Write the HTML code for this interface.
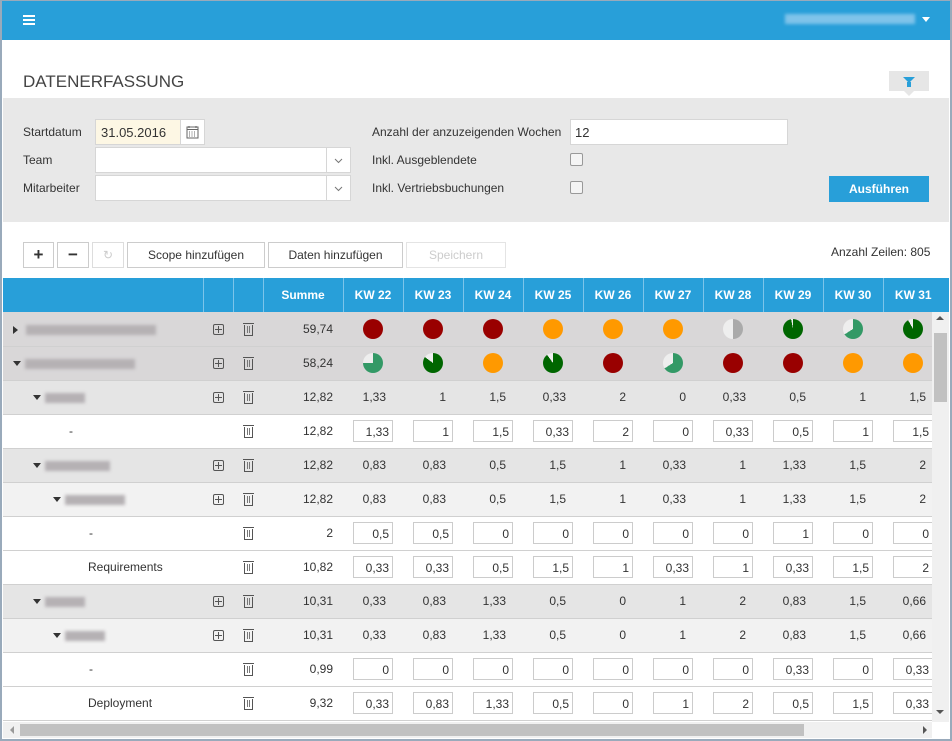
<!DOCTYPE html>
<html><head><meta charset="utf-8"><style>
*{box-sizing:border-box;margin:0;padding:0}
body{width:952px;height:741px;overflow:hidden;font-family:"Liberation Sans",sans-serif;font-size:12px;color:#333;background:#fff;position:relative}
.frame{position:absolute;left:0;top:0;width:952px;height:741px;border:2px solid #9ab;border-top:1px solid #9ab;pointer-events:none;z-index:10}
.top{position:absolute;left:0;top:0;width:952px;height:40px;background:#289fd9}
.ham{position:absolute;left:23px;top:15px;width:12px;height:2px;background:#fff;box-shadow:0 4px 0 #fff,0 8px 0 #fff}
.user{position:absolute;left:785px;top:14px;width:130px;height:10px;background:#7fc3ea;filter:blur(1.5px)}
.caret{position:absolute;left:922px;top:17px;border:4px solid transparent;border-top:5px solid #fff}
h1{position:absolute;left:23px;top:72px;font-weight:normal;font-size:17px;color:#444}
.fbtn{position:absolute;left:889px;top:71px;width:40px;height:20px;background:#e6e6e6}
.fbtn:after{content:"";position:absolute;left:15px;top:20px;border:5px solid transparent;border-top:5px solid #e6e6e6}
.funnel{position:absolute;left:14px;top:6px;border:6px solid transparent;border-top:6px solid #289fd9;border-bottom:0}
.funnel:after{content:"";position:absolute;left:-2px;top:-1px;width:4px;height:5px;background:#289fd9}
.filt{position:absolute;left:3px;top:98px;width:946px;height:124px;background:#e8e8e8}
.lbl{position:absolute;font-size:12px;color:#333}
.inp{position:absolute;background:#fff;border:1px solid #d6d6d6;height:26px;font-size:13px;padding:5px 4px}
.chk{position:absolute;width:13px;height:13px;border:1px solid #999;border-radius:2px;background:#f4f4f4}
.btn{position:absolute;border:1px solid #ccc;background:#fff;height:26px;font-size:12px;text-align:center;line-height:24px;color:#333}
.run{position:absolute;left:829px;top:176px;width:100px;height:26px;background:#289fd9;color:#fff;text-align:center;line-height:26px;font-weight:bold;font-size:12px}
.thead{position:absolute;left:3px;top:278px;width:946px;height:34px;background:#289fd9}
.wrap{position:absolute;left:3px;top:278px;width:929px;height:444px;overflow:hidden}
table{border-collapse:collapse;table-layout:fixed;width:940px}
th{height:34px;color:#fff;font-weight:bold;font-size:12px;border-left:1px solid #7cc4ea;text-align:center;background:#289fd9}
th:first-child{border-left:0}
td{height:34px;border-bottom:1px solid #d0d0d0;text-align:right;padding-right:17px;font-size:12px;white-space:nowrap}
tr.ra td{background:#d9d7d8}tr.rb td{background:#e5e5e5}tr.rc td{background:#f2f2f2}tr.rd td{background:#fff}
td.n{text-align:left;padding:0}
td.i,td.t{text-align:center;padding:0}
td.s{padding-right:10px}
td.x{padding-right:10px}
.bx{display:inline-block;width:40px;height:22px;border:1px solid #ccc;background:#fff;text-align:right;padding:3px 3px 0 0;line-height:16px}
.pl{display:inline-block;width:11px;height:11px;border:1px solid #555;border-radius:2px;position:relative;vertical-align:middle}
.pl:before{content:"";position:absolute;left:1px;top:4px;width:7px;height:1px;background:#555}
.pl:after{content:"";position:absolute;left:4px;top:1px;width:1px;height:7px;background:#555}
.tr{display:inline-block;width:9px;height:11px;border:1px solid #555;border-top:0;position:relative;vertical-align:middle;margin-top:2px}
.tr:before{content:"";position:absolute;left:-2px;top:-2px;width:11px;height:1px;background:#555}
.tr:after{content:"";position:absolute;left:2px;top:1px;width:1px;height:7px;background:#777;box-shadow:2px 0 0 #777}
.ci{display:inline-block;width:20px;height:20px;border-radius:50%;vertical-align:middle}
.R{background:#990000}.O{background:#ff9900}
.blur{display:inline-block;height:10px;background:#b5b1b4;filter:blur(1.5px);vertical-align:middle}
.ar{display:inline-block;border:4px solid transparent;border-top:5px solid #333;vertical-align:middle;margin-top:4px;margin-right:4px}
.ar2{display:inline-block;border:4px solid transparent;border-left:5px solid #333;vertical-align:middle;margin-right:4px}
.vs{position:absolute;left:932px;top:312px;width:17px;height:410px;background:#f0f0f0}
.hs{position:absolute;left:3px;top:722px;width:929px;height:16px;background:#f0f0f0}
</style></head><body>
<div class="top"><div class="ham"></div><div class="user"></div><div class="caret"></div></div>
<h1>DATENERFASSUNG</h1>
<div class="fbtn"><div class="funnel"></div></div>
<div class="filt"></div>
<div class="lbl" style="left:23px;top:125px">Startdatum</div>
<div class="inp" style="left:95px;top:119px;width:110px;background:#fdf7e4;padding:5px 5px">31.05.2016</div>
<div class="inp" style="left:180px;top:119px;width:25px;padding:0"><svg width="23" height="24" viewBox="0 0 23 24"><rect x="6" y="7" width="11" height="11" fill="none" stroke="#666"/><path d="M6 9.5h11M8 12h1M10.5 12h1M13 12h1M8 14h1M10.5 14h1M13 14h1M8 16h1M10.5 16h1M13 16h1M8 6v2M15 6v2" stroke="#666"/></svg></div>
<div class="lbl" style="left:23px;top:153px">Team</div>
<div class="inp" style="left:95px;top:147px;width:256px"></div>
<div class="inp" style="left:326px;top:147px;width:25px;padding:0"><svg width="23" height="24"><path d="M8 11l3.5 3.5L15 11" fill="none" stroke="#777"/></svg></div>
<div class="lbl" style="left:23px;top:181px">Mitarbeiter</div>
<div class="inp" style="left:95px;top:175px;width:256px"></div>
<div class="inp" style="left:326px;top:175px;width:25px;padding:0"><svg width="23" height="24"><path d="M8 11l3.5 3.5L15 11" fill="none" stroke="#777"/></svg></div>
<div class="lbl" style="left:372px;top:125px">Anzahl der anzuzeigenden Wochen</div>
<div class="inp" style="left:570px;top:119px;width:218px">12</div>
<div class="lbl" style="left:372px;top:153px">Inkl. Ausgeblendete</div>
<div class="chk" style="left:570px;top:153px"></div>
<div class="lbl" style="left:372px;top:181px">Inkl. Vertriebsbuchungen</div>
<div class="chk" style="left:570px;top:181px"></div>
<div class="run">Ausführen</div>
<div class="btn" style="left:23px;top:242px;width:31px;font-weight:bold;font-size:17px">+</div>
<div class="btn" style="left:57px;top:242px;width:32px;font-weight:bold;font-size:17px">−</div>
<div class="btn" style="left:92px;top:242px;width:32px;color:#ccc;border-color:#ddd">↻</div>
<div class="btn" style="left:127px;top:242px;width:138px">Scope hinzufügen</div>
<div class="btn" style="left:268px;top:242px;width:135px">Daten hinzufügen</div>
<div class="btn" style="left:406px;top:242px;width:100px;color:#ccc;border-color:#e4e4e4">Speichern</div>
<div class="lbl" style="left:831px;top:245px">Anzahl Zeilen: 805</div>
<div class="thead"></div>
<div class="wrap"><table>
<colgroup><col style="width:200px"><col style="width:30px"><col style="width:30px"><col style="width:80px"><col style="width:60px"><col style="width:60px"><col style="width:60px"><col style="width:60px"><col style="width:60px"><col style="width:60px"><col style="width:60px"><col style="width:60px"><col style="width:60px"><col style="width:60px"></colgroup>
<tr><th></th><th></th><th></th><th>Summe</th><th>KW 22</th><th>KW 23</th><th>KW 24</th><th>KW 25</th><th>KW 26</th><th>KW 27</th><th>KW 28</th><th>KW 29</th><th>KW 30</th><th>KW 31</th></tr>
<tr class="ra"><td class="n" style="padding-left:10px"><span class="ar2"></span><span class="blur" style="width:130px"></span></td><td class="i"><span class="pl"></span></td><td class="t"><span class="tr"></span></td><td class="s">59,74</td><td class="i"><span class="ci R"></span></td><td class="i"><span class="ci R"></span></td><td class="i"><span class="ci R"></span></td><td class="i"><span class="ci O"></span></td><td class="i"><span class="ci O"></span></td><td class="i"><span class="ci O"></span></td><td class="i"><span class="ci" style="background:conic-gradient(#aaa 0 50%,#eee 50%)"></span></td><td class="i"><span class="ci" style="background:conic-gradient(#006600 0 97%,#eee 97%)"></span></td><td class="i"><span class="ci" style="background:conic-gradient(#339966 0 66%,#eee 66%)"></span></td><td class="i"><span class="ci" style="background:conic-gradient(#006600 0 92%,#eee 92%)"></span></td></tr>
<tr class="ra"><td class="n" style="padding-left:10px"><span class="ar"></span><span class="blur" style="width:110px"></span></td><td class="i"><span class="pl"></span></td><td class="t"><span class="tr"></span></td><td class="s">58,24</td><td class="i"><span class="ci" style="background:conic-gradient(#339966 0 75%,#eee 75%)"></span></td><td class="i"><span class="ci" style="background:conic-gradient(#006600 0 85%,#eee 85%)"></span></td><td class="i"><span class="ci O"></span></td><td class="i"><span class="ci" style="background:conic-gradient(#006600 0 90%,#eee 90%)"></span></td><td class="i"><span class="ci R"></span></td><td class="i"><span class="ci" style="background:conic-gradient(#339966 0 66%,#eee 66%)"></span></td><td class="i"><span class="ci R"></span></td><td class="i"><span class="ci R"></span></td><td class="i"><span class="ci O"></span></td><td class="i"><span class="ci O"></span></td></tr>
<tr class="rb"><td class="n" style="padding-left:30px"><span class="ar"></span><span class="blur" style="width:40px"></span></td><td class="i"><span class="pl"></span></td><td class="t"><span class="tr"></span></td><td class="s">12,82</td><td>1,33</td><td>1</td><td>1,5</td><td>0,33</td><td>2</td><td>0</td><td>0,33</td><td>0,5</td><td>1</td><td>1,5</td></tr>
<tr class="rd"><td class="n" style="padding-left:66px">-</td><td></td><td class="t"><span class="tr"></span></td><td class="s">12,82</td><td class="x"><span class="bx">1,33</span></td><td class="x"><span class="bx">1</span></td><td class="x"><span class="bx">1,5</span></td><td class="x"><span class="bx">0,33</span></td><td class="x"><span class="bx">2</span></td><td class="x"><span class="bx">0</span></td><td class="x"><span class="bx">0,33</span></td><td class="x"><span class="bx">0,5</span></td><td class="x"><span class="bx">1</span></td><td class="x"><span class="bx">1,5</span></td></tr>
<tr class="rb"><td class="n" style="padding-left:30px"><span class="ar"></span><span class="blur" style="width:65px"></span></td><td class="i"><span class="pl"></span></td><td class="t"><span class="tr"></span></td><td class="s">12,82</td><td>0,83</td><td>0,83</td><td>0,5</td><td>1,5</td><td>1</td><td>0,33</td><td>1</td><td>1,33</td><td>1,5</td><td>2</td></tr>
<tr class="rc"><td class="n" style="padding-left:50px"><span class="ar"></span><span class="blur" style="width:60px"></span></td><td class="i"><span class="pl"></span></td><td class="t"><span class="tr"></span></td><td class="s">12,82</td><td>0,83</td><td>0,83</td><td>0,5</td><td>1,5</td><td>1</td><td>0,33</td><td>1</td><td>1,33</td><td>1,5</td><td>2</td></tr>
<tr class="rd"><td class="n" style="padding-left:86px">-</td><td></td><td class="t"><span class="tr"></span></td><td class="s">2</td><td class="x"><span class="bx">0,5</span></td><td class="x"><span class="bx">0,5</span></td><td class="x"><span class="bx">0</span></td><td class="x"><span class="bx">0</span></td><td class="x"><span class="bx">0</span></td><td class="x"><span class="bx">0</span></td><td class="x"><span class="bx">0</span></td><td class="x"><span class="bx">1</span></td><td class="x"><span class="bx">0</span></td><td class="x"><span class="bx">0</span></td></tr>
<tr class="rd"><td class="n" style="padding-left:85px">Requirements</td><td></td><td class="t"><span class="tr"></span></td><td class="s">10,82</td><td class="x"><span class="bx">0,33</span></td><td class="x"><span class="bx">0,33</span></td><td class="x"><span class="bx">0,5</span></td><td class="x"><span class="bx">1,5</span></td><td class="x"><span class="bx">1</span></td><td class="x"><span class="bx">0,33</span></td><td class="x"><span class="bx">1</span></td><td class="x"><span class="bx">0,33</span></td><td class="x"><span class="bx">1,5</span></td><td class="x"><span class="bx">2</span></td></tr>
<tr class="rb"><td class="n" style="padding-left:30px"><span class="ar"></span><span class="blur" style="width:40px"></span></td><td class="i"><span class="pl"></span></td><td class="t"><span class="tr"></span></td><td class="s">10,31</td><td>0,33</td><td>0,83</td><td>1,33</td><td>0,5</td><td>0</td><td>1</td><td>2</td><td>0,83</td><td>1,5</td><td>0,66</td></tr>
<tr class="rc"><td class="n" style="padding-left:50px"><span class="ar"></span><span class="blur" style="width:40px"></span></td><td class="i"><span class="pl"></span></td><td class="t"><span class="tr"></span></td><td class="s">10,31</td><td>0,33</td><td>0,83</td><td>1,33</td><td>0,5</td><td>0</td><td>1</td><td>2</td><td>0,83</td><td>1,5</td><td>0,66</td></tr>
<tr class="rd"><td class="n" style="padding-left:86px">-</td><td></td><td class="t"><span class="tr"></span></td><td class="s">0,99</td><td class="x"><span class="bx">0</span></td><td class="x"><span class="bx">0</span></td><td class="x"><span class="bx">0</span></td><td class="x"><span class="bx">0</span></td><td class="x"><span class="bx">0</span></td><td class="x"><span class="bx">0</span></td><td class="x"><span class="bx">0</span></td><td class="x"><span class="bx">0,33</span></td><td class="x"><span class="bx">0</span></td><td class="x"><span class="bx">0,33</span></td></tr>
<tr class="rd"><td class="n" style="padding-left:85px">Deployment</td><td></td><td class="t"><span class="tr"></span></td><td class="s">9,32</td><td class="x"><span class="bx">0,33</span></td><td class="x"><span class="bx">0,83</span></td><td class="x"><span class="bx">1,33</span></td><td class="x"><span class="bx">0,5</span></td><td class="x"><span class="bx">0</span></td><td class="x"><span class="bx">1</span></td><td class="x"><span class="bx">2</span></td><td class="x"><span class="bx">0,5</span></td><td class="x"><span class="bx">1,5</span></td><td class="x"><span class="bx">0,33</span></td></tr>
</table></div>
<div class="vs"><div style="position:absolute;left:4px;top:4px;border:4px solid transparent;border-bottom:4px solid #555;border-top:0"></div><div style="position:absolute;left:2px;top:21px;width:13px;height:69px;background:#c1c1c1"></div><div style="position:absolute;left:4px;top:398px;border:4px solid transparent;border-top:4px solid #555;border-bottom:0"></div></div>
<div class="hs"><div style="position:absolute;left:7px;top:4px;border:4px solid transparent;border-right:4px solid #999;border-left:0"></div><div style="position:absolute;left:17px;top:2px;width:784px;height:12px;background:#c1c1c1"></div><div style="position:absolute;left:920px;top:4px;border:4px solid transparent;border-left:4px solid #555;border-right:0"></div></div>
<div class="frame"></div>
</body></html>
